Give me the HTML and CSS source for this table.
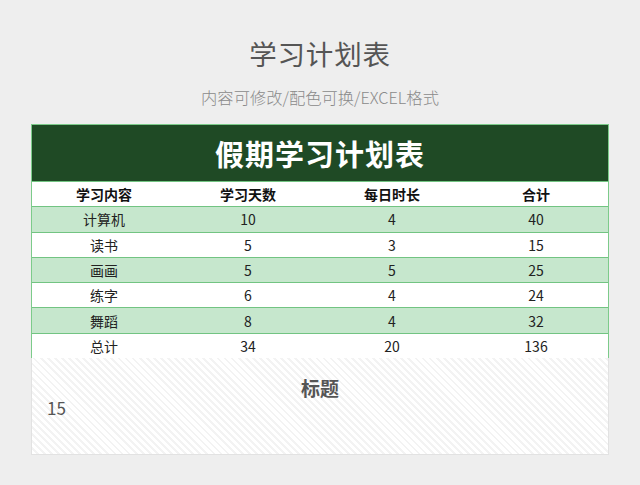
FILE: index.html
```html
<!DOCTYPE html>
<html lang="zh">
<head>
<meta charset="utf-8">
<link rel="stylesheet" href="styles.css">
</head>
<body>
<div class="page">
  <h1 class="title">学习计划表</h1>
  <p class="subtitle">内容可修改/配色可换/EXCEL格式</p>
  <div class="sheet">
    <div class="banner">假期学习计划表</div>
    <div class="row head"><span>学习内容</span><span>学习天数</span><span>每日时长</span><span>合计</span></div>
    <div class="row green"><span>计算机</span><span>10</span><span>4</span><span>40</span></div>
    <div class="row"><span>读书</span><span>5</span><span>3</span><span>15</span></div>
    <div class="row green"><span>画画</span><span>5</span><span>5</span><span>25</span></div>
    <div class="row"><span>练字</span><span>6</span><span>4</span><span>24</span></div>
    <div class="row green"><span>舞蹈</span><span>8</span><span>4</span><span>32</span></div>
    <div class="row"><span>总计</span><span>34</span><span>20</span><span>136</span></div>
  </div>
  <div class="panel">
    <div class="panel-title">标题</div>
    <div class="panel-num">15</div>
  </div>
</div>
</body>
</html>
```
FILE: styles.css
```css
* { box-sizing: border-box; }
html, body { margin: 0; padding: 0; }
body {
  background: #eeeeee;
  font-family: "Noto Sans CJK SC", "Noto Sans", sans-serif;
  width: 640px;
  height: 485px;
  overflow: hidden;
}
.page {
  display: flex;
  flex-direction: column;
  align-items: center;
}
.title {
  margin: 33px 0 0;
  height: 40px;
  line-height: 40px;
  font-size: 27.5px;
  font-weight: 400;
  color: #555555;
  letter-spacing: 0.8px;
}
.subtitle {
  margin: 12px 0 0;
  height: 24px;
  line-height: 24px;
  font-size: 16.3px;
  color: #8a8a8a;
  font-weight: 300;
}
.sheet {
  margin-top: 15px;
  width: 578px;
  border: 1px solid #7ccb8a;
  border-bottom: none;
  background: #ffffff;
}
.banner {
  height: 56px;
  background: #1f4a25;
  color: #ffffff;
  font-size: 29px;
  font-weight: 700;
  line-height: 56px;
  text-align: center;
  letter-spacing: 1px;
}
.row {
  display: grid;
  grid-template-columns: repeat(4, 1fr);
  height: 25.3px;
  border-top: 1.5px solid #72c482;
  font-size: 14px;
  color: #222222;
  align-items: center;
  text-align: center;
}
.row.head { font-weight: 700; color: #111111; }
.row.green { background: #c6e7cd; }
.panel {
  width: 578px;
  height: 97px;
  border: 1px solid #e2e2e2;
  border-top: none;
  background-color: #ffffff;
  background-image: repeating-linear-gradient(45deg, #ffffff 0, #ffffff 3px, #f3f3f3 3px, #f3f3f3 5px);
  padding: 20px 0 0 15px;
}
.panel-title {
  text-align: center;
  font-size: 19px;
  font-weight: 700;
  line-height: 20px;
  color: #555555;
  padding-right: 15px;
}
.panel-num {
  font-size: 17px;
  line-height: 20px;
  color: #555555;
}
```
